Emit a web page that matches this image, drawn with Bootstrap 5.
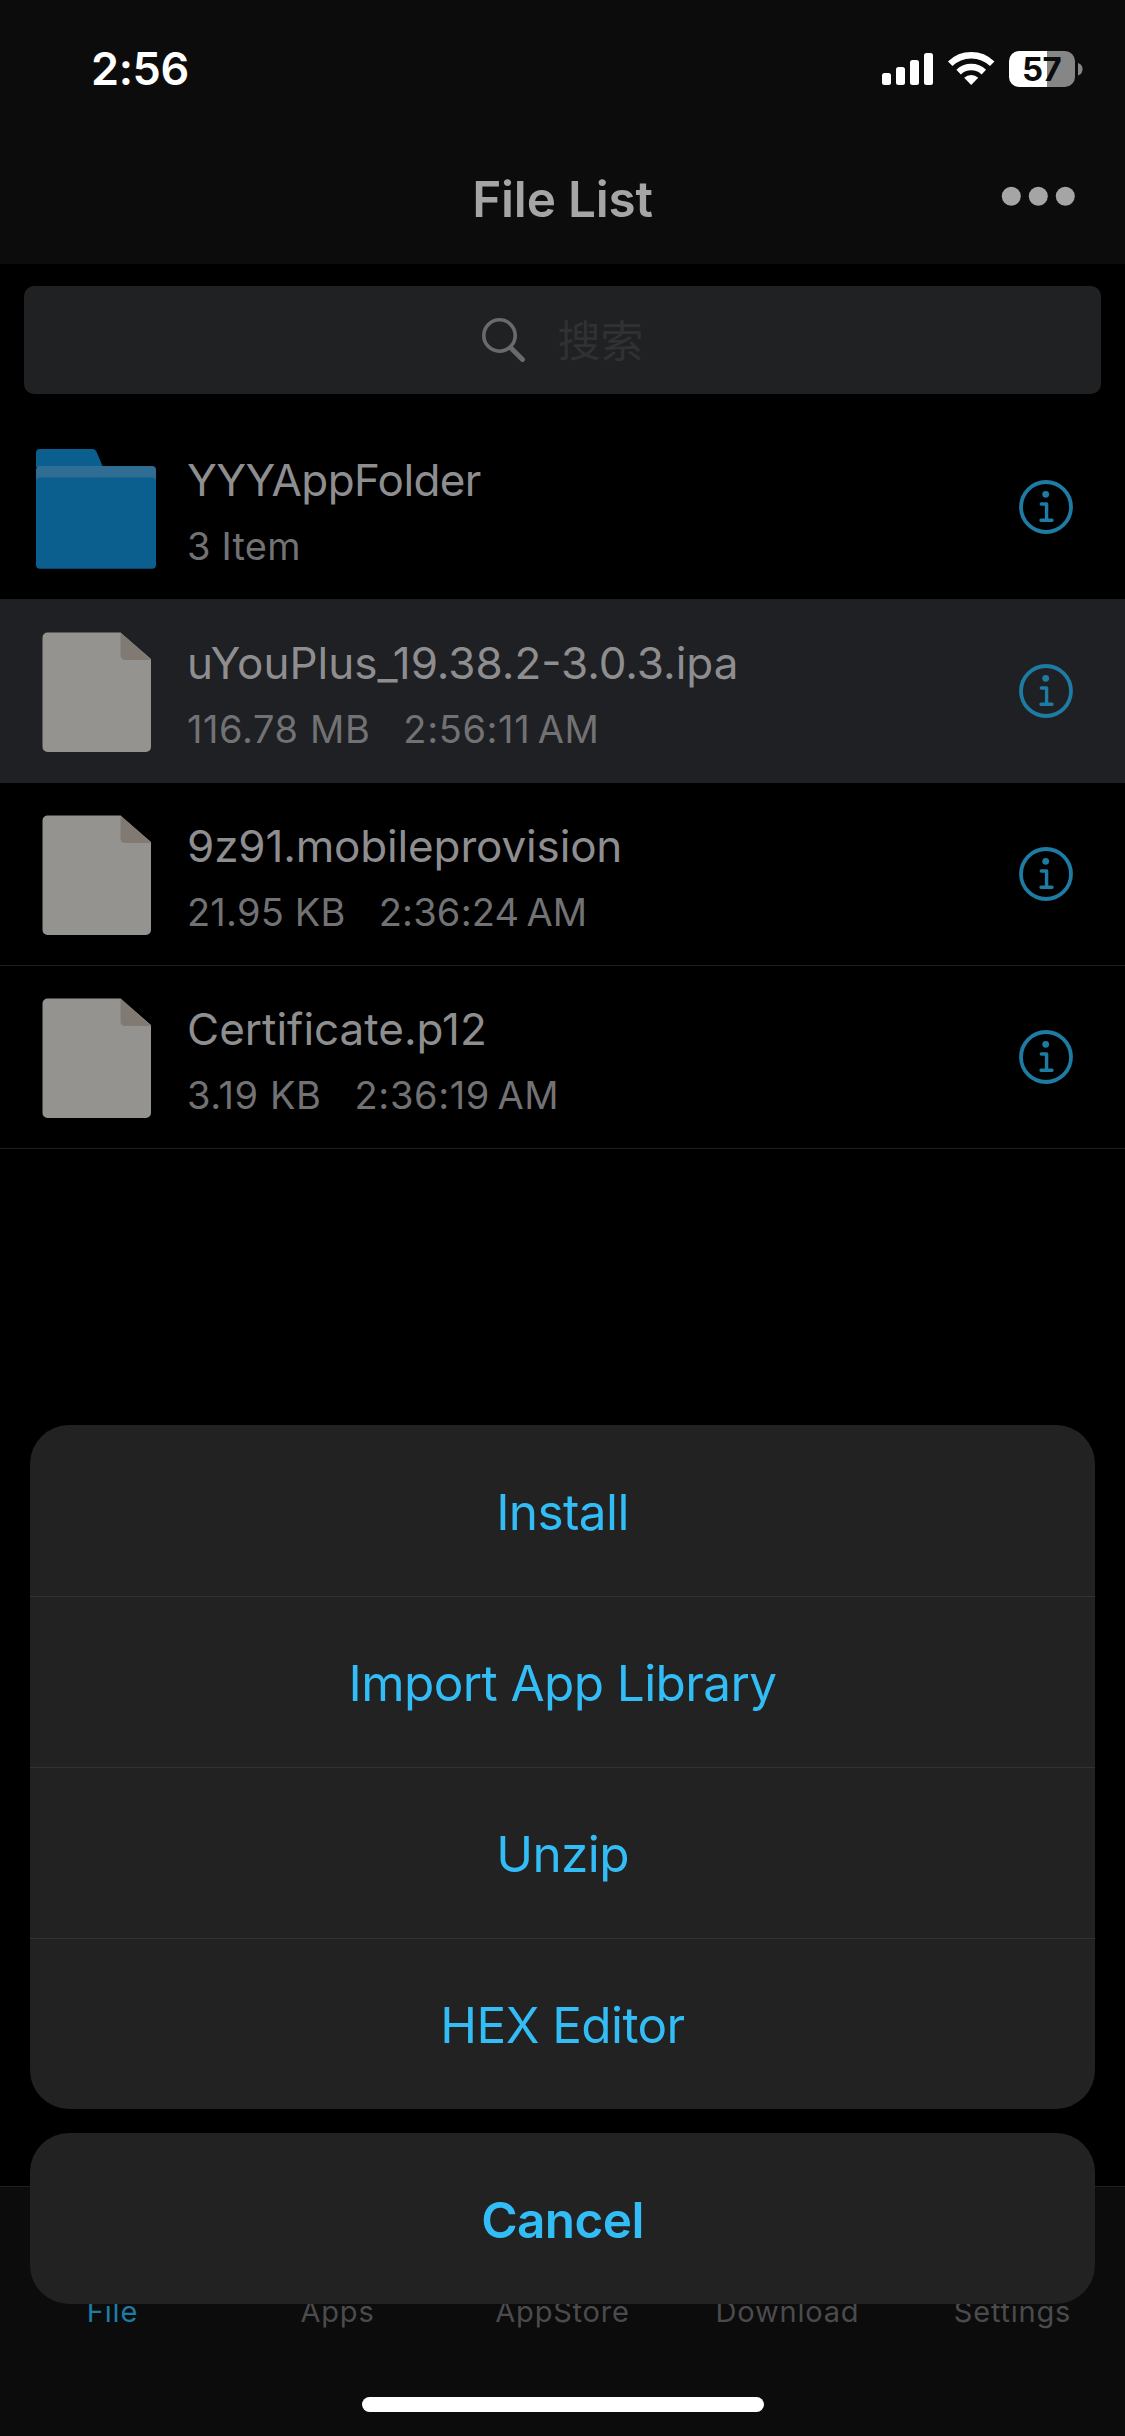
<!DOCTYPE html>
<html lang="en" data-bs-theme="dark">
<head>
<meta charset="utf-8">
<meta name="viewport" content="width=device-width, initial-scale=1">
<title>File List</title>
<link rel="stylesheet" href="https://cdn.jsdelivr.net/npm/bootstrap@5.3.0/dist/css/bootstrap.min.css">
<style>
  body { background: #000; font-family: Inter, "Noto Sans CJK SC", sans-serif; }
  .phone { width: 1125px; height: 2436px; }
  .chrome { background: #0c0c0c; }
  .statusbar { height: 132px; padding: 0 43px 0 91px; }
  .clock { font-size: 45px; line-height: 54px; font-weight: 600; letter-spacing: -.4px; color: #fff; padding-top: 42px; }
  .sysicons { margin-top: 51px; overflow: visible; }
  .titlebar { height: 132px; display: grid; grid-template-columns: 1fr auto 1fr; }
  .titletext { font-size: 49.5px; line-height: 60px; font-weight: 600; letter-spacing: -.2px; color: #a5a5a5; padding-top: 37px; }
  .more { padding: 54px 50px 0 0; }
  .searchwrap { padding: 22px 24px; }
  .searchbox { height: 108px; border-radius: 10px; background: #202122; gap: 32px; }
  .searchhint { font-family: "Noto Sans CJK SC", sans-serif; font-size: 43px; line-height: 60px; color: #303133; padding-bottom: 4px; }
  .filerow { height: 183px; border-bottom: 1px solid #202022; padding: 0 52px 0 36px; }
  .filerow.first { border-bottom-color: transparent; }
  .filerow.picked { background: #1f2023; border-bottom-color: #1f2023; height: 184px; }
  .filerow.first > div, .filerow.picked > div { margin-top: 1px; }
  .fileicon { width: 151px; padding-top: 32px; }
  .docicon { padding-left: 6px; }
  .fname { font-size: 44px; line-height: 54px; color: #8e8e90; padding-top: 36px; white-space: nowrap; }
  .first .fname { letter-spacing: -.6px; }
  .tight .fname { letter-spacing: -.15px; }
  .fmeta { font-size: 38px; line-height: 46px; color: #727274; margin-top: 16px; white-space: nowrap; gap: 33px; letter-spacing: .6px; }
  .first .fmeta, .tight .fmeta { letter-spacing: .2px; }
  .tabs { height: 250px; border-top: 1px solid #202022; }
  .tabs .tab { font-size: 29px; line-height: 36px; letter-spacing: .8px; color: #4b4b4d; padding-top: 107px; }
  .tabs .tab.on { color: #1e7ba3; }
  .sheet { left: 30px; right: 30px; top: 1425px; gap: 24px; }
  .group { background: #222; border-radius: 39px; overflow: hidden; }
  .act { height: 171px; padding-top: 3px; font-size: 49.5px; letter-spacing: -.6px; color: #32bdf7; }
  .act + .act { border-top: 1px solid #323233; }
  .act.strong { font-weight: 600; }
  .home { width: 402px; height: 15px; border-radius: 8px; background: #fff; left: 362px; top: 2397px; }
</style>
<script src="https://cdn.jsdelivr.net/npm/bootstrap@5.3.0/dist/js/bootstrap.bundle.min.js"></script>
</head>
<body>
<svg width="0" height="0" class="position-absolute">
  <defs>
    <symbol id="info" viewBox="0 0 54 54">
      <circle cx="27" cy="27" r="25" fill="none" stroke="#1e7ba3" stroke-width="3.800"/>
      <circle cx="26.700" cy="14.300" r="3.400" fill="#1e7ba3"/>
      <path d="M22.300 24h5.300v16.200M22 40.200h11" fill="none" stroke="#1e7ba3" stroke-width="3.400" stroke-linecap="round" stroke-linejoin="round"/>
    </symbol>
    <symbol id="doc" viewBox="0 0 110 121">
      <path d="M5 0.500H78.500L109 27V115a5 5 0 0 1-5 5H5.500a5 5 0 0 1-5-5V5.500a5 5 0 0 1 5-5z" fill="#959390"/>
      <path d="M78.500 0.500L109 28H83a4.500 4.500 0 0 1-4.500-4.500z" fill="#807a73"/>
    </symbol>
  </defs>
</svg>
<div class="phone position-relative d-flex flex-column overflow-hidden">
  <header class="chrome">
    <div class="statusbar d-flex justify-content-between align-items-start">
      <div class="clock">2:56</div>
      <svg class="sysicons" width="200" height="36" viewBox="882 51 200 36">
        <g fill="#fff">
          <rect x="882" y="73" width="9" height="12" rx="2.500"/><rect x="896" y="67" width="9" height="18" rx="2.500"/>
          <rect x="910" y="60" width="9" height="25" rx="2.500"/><rect x="924" y="53" width="9" height="32" rx="2.500"/>
          <path d="M971.200 85l-7-7.200a10 10 0 0 1 14 0z"/>
        </g>
        <g fill="none" stroke="#fff" stroke-width="6.400">
          <path d="M950.200 63.800a30 30 0 0 1 42 0"/><path d="M958.600 72.100a18.200 18.200 0 0 1 25.200 0"/>
        </g>
        <path d="M1047 51h18a10 10 0 0 1 10 10v16a10 10 0 0 1-10 10h-18z" fill="#868686"/>
        <path d="M1047 51h-28a10 10 0 0 0-10 10v16a10 10 0 0 0 10 10h28z" fill="#fff"/>
        <path d="M1078 63a6.500 6.500 0 0 1 0 12.400z" fill="#868686"/>
        <text x="1041.500" y="81" text-anchor="middle" font-family="Inter" font-weight="700" font-size="33" letter-spacing="-.6" fill="#0c0c0c">57</text>
      </svg>
    </div>
    <div class="titlebar">
      <span></span>
      <div class="titletext">File List</div>
      <div class="more d-flex justify-content-end align-items-start">
        <svg width="74" height="20" viewBox="0 0 74 20" fill="#a5a5a5"><circle cx="10.300" cy="10.300" r="9.500"/><circle cx="37.300" cy="10.300" r="9.500"/><circle cx="64.300" cy="10.300" r="9.500"/></svg>
      </div>
    </div>
  </header>
  <main class="flex-grow-1">
    <div class="searchwrap">
      <div class="searchbox d-flex align-items-center justify-content-center">
        <svg width="44" height="44" viewBox="0 0 44 44" fill="none" stroke="#6a696e"><circle cx="17.500" cy="17.500" r="15.700" stroke-width="3.600"/><path d="M29.500 30.500L40.500 41.500" stroke-width="5" stroke-linecap="round"/></svg>
        <span class="searchhint">搜索</span>
      </div>
    </div>
    <div class="filerow first d-flex">
      <div class="fileicon"><svg width="120" height="120" viewBox="0 0 120 120">
        <path d="M4 0H57a4 4 0 0 1 3.400 2.400L67 18H0V4a4 4 0 0 1 4-4z" fill="#0b5f8e"/>
        <rect y="17" width="120" height="30" rx="4" fill="#2f6d92"/><rect y="28.500" width="120" height="91.300" rx="4" fill="#0b5f8e"/></svg></div>
      <div class="flex-grow-1"><div class="fname">YYYAppFolder</div><div class="fmeta">3 Item</div></div>
      <svg class="align-self-center" width="54" height="54"><use href="#info"/></svg>
    </div>
    <div class="filerow picked d-flex">
      <div class="fileicon docicon"><svg width="110" height="121"><use href="#doc"/></svg></div>
      <div class="flex-grow-1"><div class="fname">uYouPlus_19.38.2-3.0.3.ipa</div><div class="fmeta d-flex"><span>116.78 MB</span><span>2:56:11&#8239;AM</span></div></div>
      <svg class="align-self-center" width="54" height="54"><use href="#info"/></svg>
    </div>
    <div class="filerow tight d-flex">
      <div class="fileicon docicon"><svg width="110" height="121"><use href="#doc"/></svg></div>
      <div class="flex-grow-1"><div class="fname">9z91.mobileprovision</div><div class="fmeta d-flex"><span>21.95 KB</span><span>2:36:24&#8239;AM</span></div></div>
      <svg class="align-self-center" width="54" height="54"><use href="#info"/></svg>
    </div>
    <div class="filerow d-flex">
      <div class="fileicon docicon"><svg width="110" height="121"><use href="#doc"/></svg></div>
      <div class="flex-grow-1"><div class="fname">Certificate.p12</div><div class="fmeta d-flex"><span>3.19 KB</span><span>2:36:19&#8239;AM</span></div></div>
      <svg class="align-self-center" width="54" height="54"><use href="#info"/></svg>
    </div>
  </main>
  <footer class="tabs chrome row g-0 row-cols-5 text-center">
    <div class="col tab on">File</div>
    <div class="col tab">Apps</div>
    <div class="col tab">AppStore</div>
    <div class="col tab">Download</div>
    <div class="col tab">Settings</div>
  </footer>
  <div class="sheet position-absolute d-flex flex-column">
    <div class="group">
      <div class="act d-flex align-items-center justify-content-center">Install</div>
      <div class="act d-flex align-items-center justify-content-center">Import App Library</div>
      <div class="act d-flex align-items-center justify-content-center">Unzip</div>
      <div class="act d-flex align-items-center justify-content-center">HEX Editor</div>
    </div>
    <div class="group"><div class="act strong d-flex align-items-center justify-content-center">Cancel</div></div>
  </div>
  <div class="home position-absolute"></div>
</div>
</body>
</html>
